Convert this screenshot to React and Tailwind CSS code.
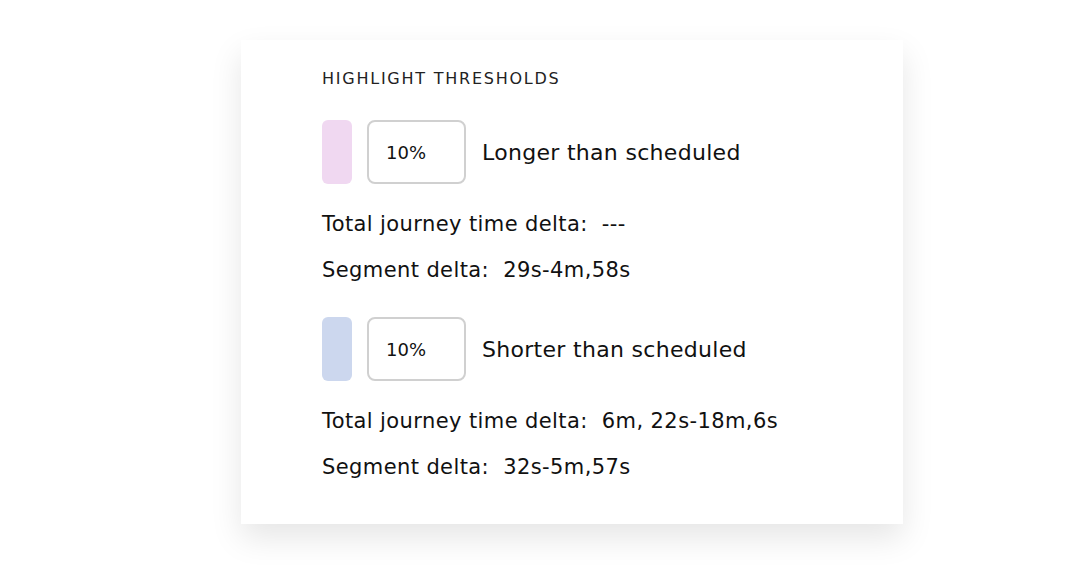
export default function App() {
  const font = { fontFamily: '"DejaVu Sans", "Noto Sans", sans-serif' };
  return (
    <div className="w-[1075px] h-[565px] bg-white pt-[40px] pl-[241px]" style={font}>
      <div className="w-[662px] h-[484px] bg-white shadow-[0_14px_30px_rgba(0,0,0,0.1)] pl-[81px] pt-[28px]">
        <h2 className="text-[16px] leading-[22px] tracking-[0.11em] text-[#222] uppercase">Highlight thresholds</h2>

        <ThresholdRow color="bg-[#f0d8f1]" label="Longer than scheduled" className="mt-[30px]" />
        <div className="mt-[25px] text-[21px] leading-[30px] tracking-[0.4px] text-[#111] whitespace-pre">Total journey time delta:  ---</div>
        <div className="mt-[16px] text-[21px] leading-[30px] tracking-[0.4px] text-[#111] whitespace-pre">Segment delta:  29s-4m,58s</div>

        <ThresholdRow color="bg-[#ccd7ee]" label="Shorter than scheduled" className="mt-[32px]" />
        <div className="mt-[25px] text-[21px] leading-[30px] tracking-[0.4px] text-[#111] whitespace-pre">Total journey time delta:  6m, 22s-18m,6s</div>
        <div className="mt-[16px] text-[21px] leading-[30px] tracking-[0.4px] text-[#111] whitespace-pre">Segment delta:  32s-5m,57s</div>
      </div>
    </div>
  );
}

function ThresholdRow({ color, label, className }) {
  return (
    <div className={"flex items-center " + className}>
      <div className={"w-[30px] h-[64px] rounded-[6px] " + color}></div>
      <div className="ml-[15px] w-[99px] h-[64px] rounded-[8px] border-2 border-[#d0d0d0] flex items-center pl-[17px] text-[18px] text-[#111]">
        10%
      </div>
      <span className="ml-[16px] text-[22px] tracking-[0.3px] text-[#111]">{label}</span>
    </div>
  );
}
